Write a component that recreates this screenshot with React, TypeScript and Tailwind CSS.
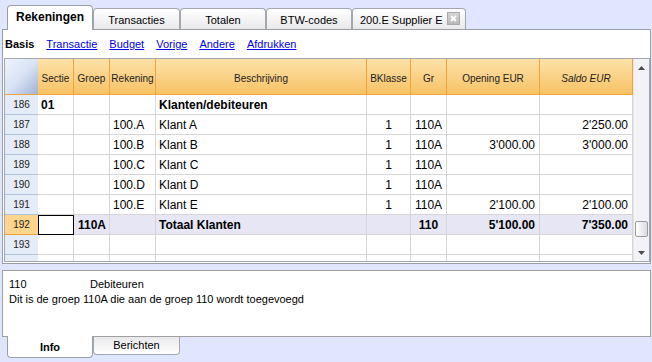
import React from 'react'

const font = "font-['Liberation_Sans',Arial,sans-serif]"

type Row = {
  n: number
  sectie?: string
  groep?: string
  rek?: string
  beschr?: string
  bk?: string
  gr?: string
  opening?: string
  saldo?: string
  bold?: boolean
  total?: boolean
}

const rows: Row[] = [
  { n: 186, sectie: '01', beschr: 'Klanten/debiteuren', bold: true },
  { n: 187, rek: '100.A', beschr: 'Klant A', bk: '1', gr: '110A', saldo: "2'250.00" },
  { n: 188, rek: '100.B', beschr: 'Klant B', bk: '1', gr: '110A', opening: "3'000.00", saldo: "3'000.00" },
  { n: 189, rek: '100.C', beschr: 'Klant C', bk: '1', gr: '110A' },
  { n: 190, rek: '100.D', beschr: 'Klant D', bk: '1', gr: '110A' },
  { n: 191, rek: '100.E', beschr: 'Klant E', bk: '1', gr: '110A', opening: "2'100.00", saldo: "2'100.00" },
  { n: 192, groep: '110A', beschr: 'Totaal Klanten', gr: '110', opening: "5'100.00", saldo: "7'350.00", bold: true, total: true },
  { n: 193 },
]

const topTabs = [
  { label: 'Transacties', w: 'w-[87px]' },
  { label: 'Totalen', w: 'w-[86px]' },
  { label: 'BTW-codes', w: 'w-[86px]' },
]

const links = ['Transactie', 'Budget', 'Vorige', 'Andere', 'Afdrukken']

function HeaderCell({ w, children, italic }: { w: string; children: React.ReactNode; italic?: boolean }) {
  return (
    <div
      className={`${w} shrink-0 h-full flex items-center justify-center pt-[3px] border-r border-[#efa53a] text-[10px] text-[#222] ${italic ? 'italic' : ''}`}
    >
      {children}
    </div>
  )
}

function Cell({ w, align, children, className = '' }: { w: string; align: string; children?: React.ReactNode; className?: string }) {
  return (
    <div className={`${w} shrink-0 h-full flex items-center border-r border-[#d6d6d6] whitespace-nowrap ${align} ${className}`}>
      {children}
    </div>
  )
}

function TableRow({ r }: { r: Row }) {
  const bg = r.total ? 'bg-[#e6e6f5]' : 'bg-white'
  return (
    <div className={`flex h-[20px] text-[12px] text-black ${r.bold ? 'font-bold' : ''}`}>
      <div
        className={`w-[33px] shrink-0 flex items-center justify-center text-[10px] font-normal text-[#222] border-b ${
          r.total ? 'bg-[#fdd58c] border-[#f0a23a]' : 'bg-[#e4ecf7] border-[#aec2dc]'
        }`}
      >
        {r.n}
      </div>
      <div className={`flex flex-1 border-b border-[#d6d6d6] ${bg}`}>
        {r.total ? (
          <div className="w-[36px] shrink-0 h-[20px] -mb-px border border-black bg-white" />
        ) : (
          <Cell w="w-[36px]" align="pl-[3px]">{r.sectie}</Cell>
        )}
        <Cell w="w-[36px]" align="pl-[4px]">{r.groep}</Cell>
        <Cell w="w-[46px]" align="pl-[3px]">{r.rek}</Cell>
        <Cell w="w-[211px]" align="pl-[3px]">{r.beschr}</Cell>
        <Cell w="w-[44px]" align="justify-center">{r.bk}</Cell>
        <Cell w="w-[36px]" align="justify-center">{r.gr}</Cell>
        <Cell w="w-[93px]" align="justify-end pr-[4px]">{r.opening}</Cell>
        <Cell w="w-[93px]" align="justify-end pr-[4px]">{r.saldo}</Cell>
      </div>
    </div>
  )
}

function Scrollbar() {
  return (
    <div className="w-[16px] shrink-0 flex flex-col bg-[#f3f3f7] border-l border-[#e6e6ea]">
      <div className="h-[17px] flex items-center justify-center pt-[1px]">
        <svg width="7" height="4" viewBox="0 0 7 4">
          <path d="M0 4 L3.5 0 L7 4 Z" fill="#4a4a4a" />
        </svg>
      </div>
      <div className="mt-auto mb-[8px] mx-[1px] h-[16px] rounded-[2px] border border-[#9c9c9c] bg-linear-to-r from-white to-[#dcdce0]" />
      <div className="h-[16px] flex items-center justify-center">
        <svg width="7" height="4" viewBox="0 0 7 4">
          <path d="M0 0 L7 0 L3.5 4 Z" fill="#4a4a4a" />
        </svg>
      </div>
    </div>
  )
}

export default function App() {
  return (
    <div className={`w-[652px] h-[362px] overflow-hidden bg-[#dfe6fd] ${font}`}>
      {/* top tabs */}
      <div className="flex items-end h-[29px] pl-[7px]">
        <div className="relative z-10 -mb-px w-[86px] h-[25px] flex items-center justify-center pb-[2px] bg-white border-x border-t border-[#9aa0a8] rounded-t-[4px] text-[12px] font-bold text-black">
          Rekeningen
        </div>
        {topTabs.map((t) => (
          <div
            key={t.label}
            className={`${t.w} h-[21px] flex items-center justify-center pt-[2px] bg-linear-to-b from-white to-[#e9e9ec] border-x border-t border-[#a2a7ae] rounded-t-[4px] text-[11px] text-black`}
          >
            {t.label}
          </div>
        ))}
        <div className="w-[114px] h-[21px] flex items-center justify-between pl-[7px] pr-[5px] pt-[2px] bg-linear-to-b from-white to-[#e9e9ec] border-x border-t border-[#a2a7ae] rounded-t-[4px] text-[11px] text-black">
          <span>200.E Supplier E</span>
          <span className="w-[13px] h-[13px] -mt-[3px] flex items-center justify-center bg-linear-to-b from-[#d4d4d4] to-[#b8b8b8] border border-[#a9a9a9]">
            <svg width="7" height="7" viewBox="0 0 7 7">
              <path d="M1 1 L6 6 M6 1 L1 6" stroke="white" strokeWidth="1.8" />
            </svg>
          </span>
        </div>
      </div>

      {/* main panel */}
      <div className="ml-[2px] w-[649px] bg-white border border-[#9a9ea6] pl-px pb-px">
        <div className="h-[28px] flex items-center gap-[12px] pl-px text-[11px]">
          <span className="font-bold text-black">Basis</span>
          {links.map((l) => (
            <span key={l} className="text-[#0000ee] underline">
              {l}
            </span>
          ))}
        </div>

        <div className="flex w-[646px] border border-[#a3a6ad]">
          <div className="flex flex-col w-[628px]">
            <div className="flex h-[36px] border-b border-[#efa53a]">
              <div className="w-[33px] shrink-0 h-full bg-linear-to-br from-[#eef3fc] via-[#d9e3f4] to-[#9fb3d6]" />
              <div className="flex flex-1 bg-linear-to-b from-[#fde2a8] to-[#f7c264]">
                <HeaderCell w="w-[36px]">Sectie</HeaderCell>
                <HeaderCell w="w-[36px]">Groep</HeaderCell>
                <HeaderCell w="w-[46px]">Rekening</HeaderCell>
                <HeaderCell w="w-[211px]">Beschrijving</HeaderCell>
                <HeaderCell w="w-[44px]">BKlasse</HeaderCell>
                <HeaderCell w="w-[36px]">Gr</HeaderCell>
                <HeaderCell w="w-[93px]">Opening EUR</HeaderCell>
                <HeaderCell w="w-[93px]" italic>
                  Saldo EUR
                </HeaderCell>
              </div>
            </div>
            {rows.map((r) => (
              <TableRow key={r.n} r={r} />
            ))}
            <div className="flex h-[6px]">
              <div className="w-[33px] shrink-0 bg-[#e4ecf7]" />
              <div className="flex flex-1">
                <div className="w-[36px] border-r border-[#d6d6d6]" />
                <div className="w-[36px] border-r border-[#d6d6d6]" />
                <div className="w-[46px] border-r border-[#d6d6d6]" />
                <div className="w-[211px] border-r border-[#d6d6d6]" />
                <div className="w-[44px] border-r border-[#d6d6d6]" />
                <div className="w-[36px] border-r border-[#d6d6d6]" />
                <div className="w-[93px] border-r border-[#d6d6d6]" />
                <div className="w-[93px] border-r border-[#d6d6d6]" />
              </div>
            </div>
          </div>
          <Scrollbar />
        </div>
      </div>

      {/* info panel */}
      <div className="mt-[6px] ml-[2px] w-[649px] h-[67px] bg-white border border-[#a0a0a0] pl-[6px] pt-[6px] text-[11px] leading-[15px] text-black">
        <div className="flex">
          <span className="w-[81px]">110</span>
          <span>Debiteuren</span>
        </div>
        <div>Dit is de groep 110A die aan de groep 110 wordt toegevoegd</div>
      </div>

      {/* bottom tabs */}
      <div className="flex items-start pl-[7px] text-[11px] text-black">
        <div className="relative z-10 -mt-px w-[86px] h-[22px] flex items-center justify-center pt-[2px] bg-white border-x border-b border-[#9aa0a8] rounded-b-[4px] font-bold">
          Info
        </div>
        <div className="w-[87px] h-[18px] flex items-center justify-center bg-linear-to-t from-white to-[#e9e9ec] border-x border-b border-[#a2a7ae] rounded-b-[4px]">
          Berichten
        </div>
      </div>
    </div>
  )
}
